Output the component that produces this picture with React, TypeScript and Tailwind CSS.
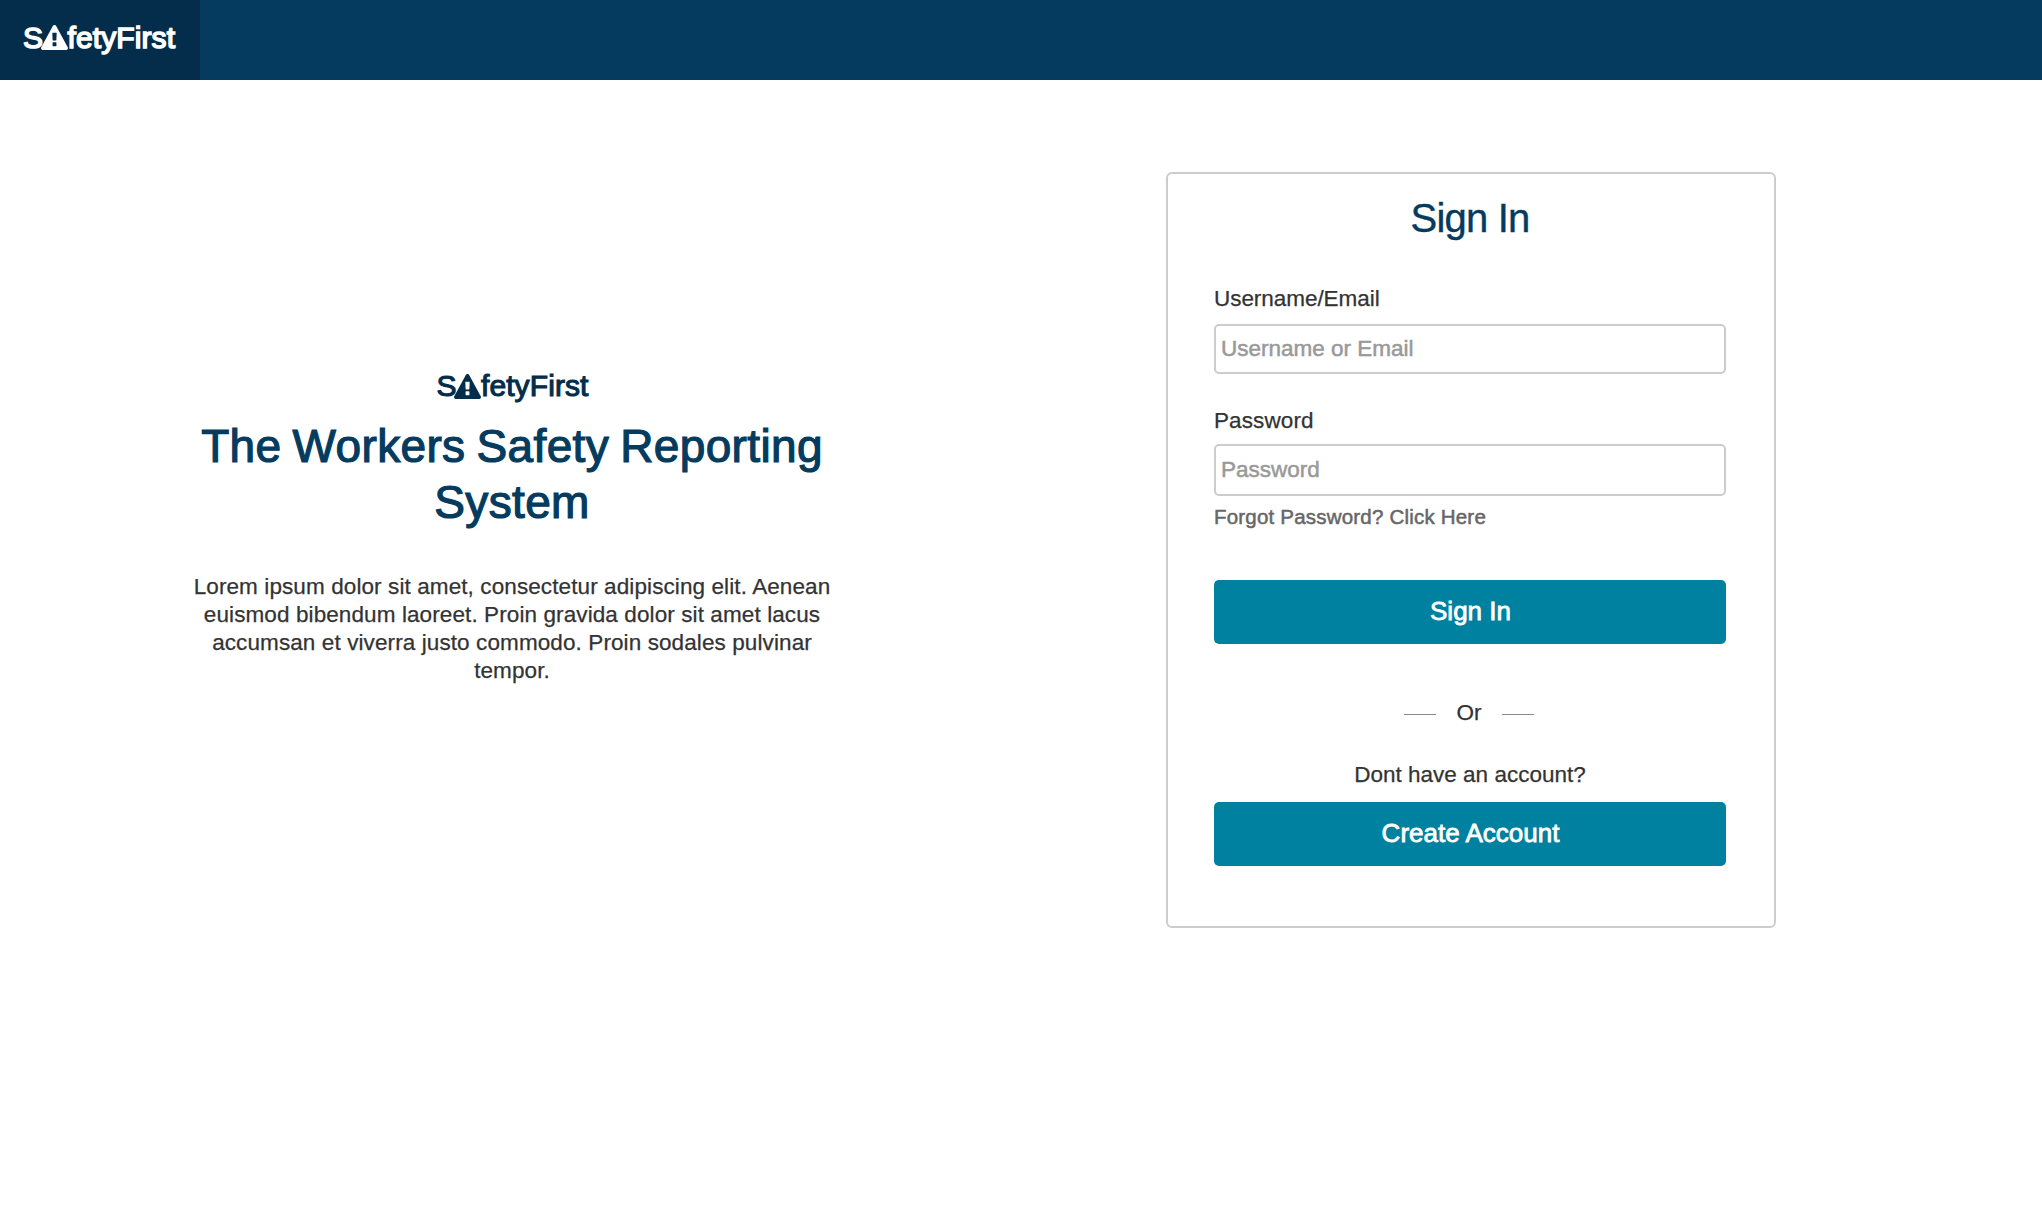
import React from "react";

function WarningIcon({ className }: { className: string }) {
  return (
    <svg viewBox="0 0 1792 1664" fill="currentColor" className={className} aria-hidden="true">
      <path d="M1024 1375v-190q0 -14 -9.5 -23.5t-22.5 -9.5h-192q-13 0 -22.5 9.5t-9.5 23.5v190q0 14 9.5 23.5t22.5 9.5h192q13 0 22.5 -9.5t9.5 -23.5zM1022 1001l18 -459q0 -12 -10 -19q-13 -11 -24 -11h-220q-11 0 -24 11q-10 7 -10 21l17 457q0 10 10 16.5t24 6.5h185q14 0 23.5 -6.5t10.5 -16.5zM1008 67l768 1408q35 63 -2 126q-17 29 -46.5 46t-63.5 17h-1536q-34 0 -63.5 -17t-46.5 -46q-37 -63 -2 -126l768 -1408q17 -31 47 -49t65 -18t65 18t47 49z" />
    </svg>
  );
}

function Logo({ className }: { className: string }) {
  return (
    <div className={`flex items-center text-[30px] leading-10 ${className}`}>
      <span>S</span>
      <WarningIcon className="-ml-[2px] h-[25px] w-[27px]" />
      <span className="-ml-[0.5px] tracking-[0.1px]">fetyFirst</span>
    </div>
  );
}

const fieldClass =
  "block w-full rounded-[5px] border-2 border-[#cccccc] bg-white pl-[5px] text-[22.5px] text-[#333333] placeholder:text-[#999999] placeholder:opacity-100 placeholder:[-webkit-text-stroke:0.5px_#999999]";
const buttonClass =
  "block h-16 w-full rounded-[5px] bg-[#0081a0] pb-[3px] pl-px text-[26px] text-white [-webkit-text-stroke:0.8px_white]";

export default function App() {
  return (
    <div className="min-h-screen bg-white font-['Liberation_Sans',Arial,sans-serif] text-[22.5px] leading-7 text-[#333333]">
      <header className="flex h-20 bg-[#043b5e]">
        <a className="flex w-[200px] items-center bg-[#032d4a] pb-[5px] pl-[23px] text-white">
          <Logo className="[-webkit-text-stroke:1.5px_white]" />
        </a>
      </header>

      <main className="flex items-start">
        <section className="flex w-[1024px] flex-col items-center pt-[286px] text-center">
          <Logo className="pl-px text-[#032d4a] [-webkit-text-stroke:1.1px_#032d4a]" />
          <h1 className="mt-3 w-[640px] text-[46px] leading-[56px] tracking-[0.35px] text-[#043b5e] [word-spacing:-2px] [-webkit-text-stroke:1.2px_#043b5e]">
            The Workers Safety Reporting System
          </h1>
          <p className="mt-[43px] w-[650px] tracking-[0.1px] [-webkit-text-stroke:0.25px_#333333]">
            Lorem ipsum dolor sit amet, consectetur adipiscing elit. Aenean euismod bibendum laoreet. Proin gravida dolor
            sit amet lacus accumsan et viverra justo commodo. Proin sodales pulvinar tempor.
          </p>
        </section>

        <form className="mt-[92px] ml-[142px] h-[756px] w-[610px] rounded-md border-2 border-[#cccccc] pt-5 pl-[46px] pr-12 [-webkit-text-stroke:0.25px_#333333]">
          <h2 className="text-center text-[40px] leading-[48px] tracking-[-0.8px] text-[#043b5e] [-webkit-text-stroke:0.4px_#043b5e]">
            Sign In
          </h2>

          <label htmlFor="user" className="mt-[43px] block tracking-[-0.05px]">
            Username/Email
          </label>
          <input id="user" placeholder="Username or Email" className={`${fieldClass} mt-[11px] h-[50px]`} />

          <label htmlFor="pass" className="mt-[33px] block tracking-[0.1px]">
            Password
          </label>
          <input id="pass" type="password" placeholder="Password" className={`${fieldClass} mt-[9px] h-[52px]`} />
          <a className="mt-[7px] block text-[20.5px] leading-7 tracking-[0.2px] text-[#666666] [-webkit-text-stroke:0.5px_#666666]">
            Forgot Password? Click Here
          </a>

          <button type="button" className={`${buttonClass} mt-[49px]`}>
            Sign In
          </button>

          <div className="mt-[54px] flex items-center justify-center pr-[2px]">
            <span className="mt-[3px] h-px w-8 bg-[#888888]" />
            <span className="w-[66px] pt-px text-center">Or</span>
            <span className="mt-[3px] h-px w-8 bg-[#888888]" />
          </div>

          <p className="mt-[34px] text-center">Dont have an account?</p>
          <button type="button" className={`${buttonClass} mt-[13px]`}>
            Create Account
          </button>
        </form>
      </main>
    </div>
  );
}
